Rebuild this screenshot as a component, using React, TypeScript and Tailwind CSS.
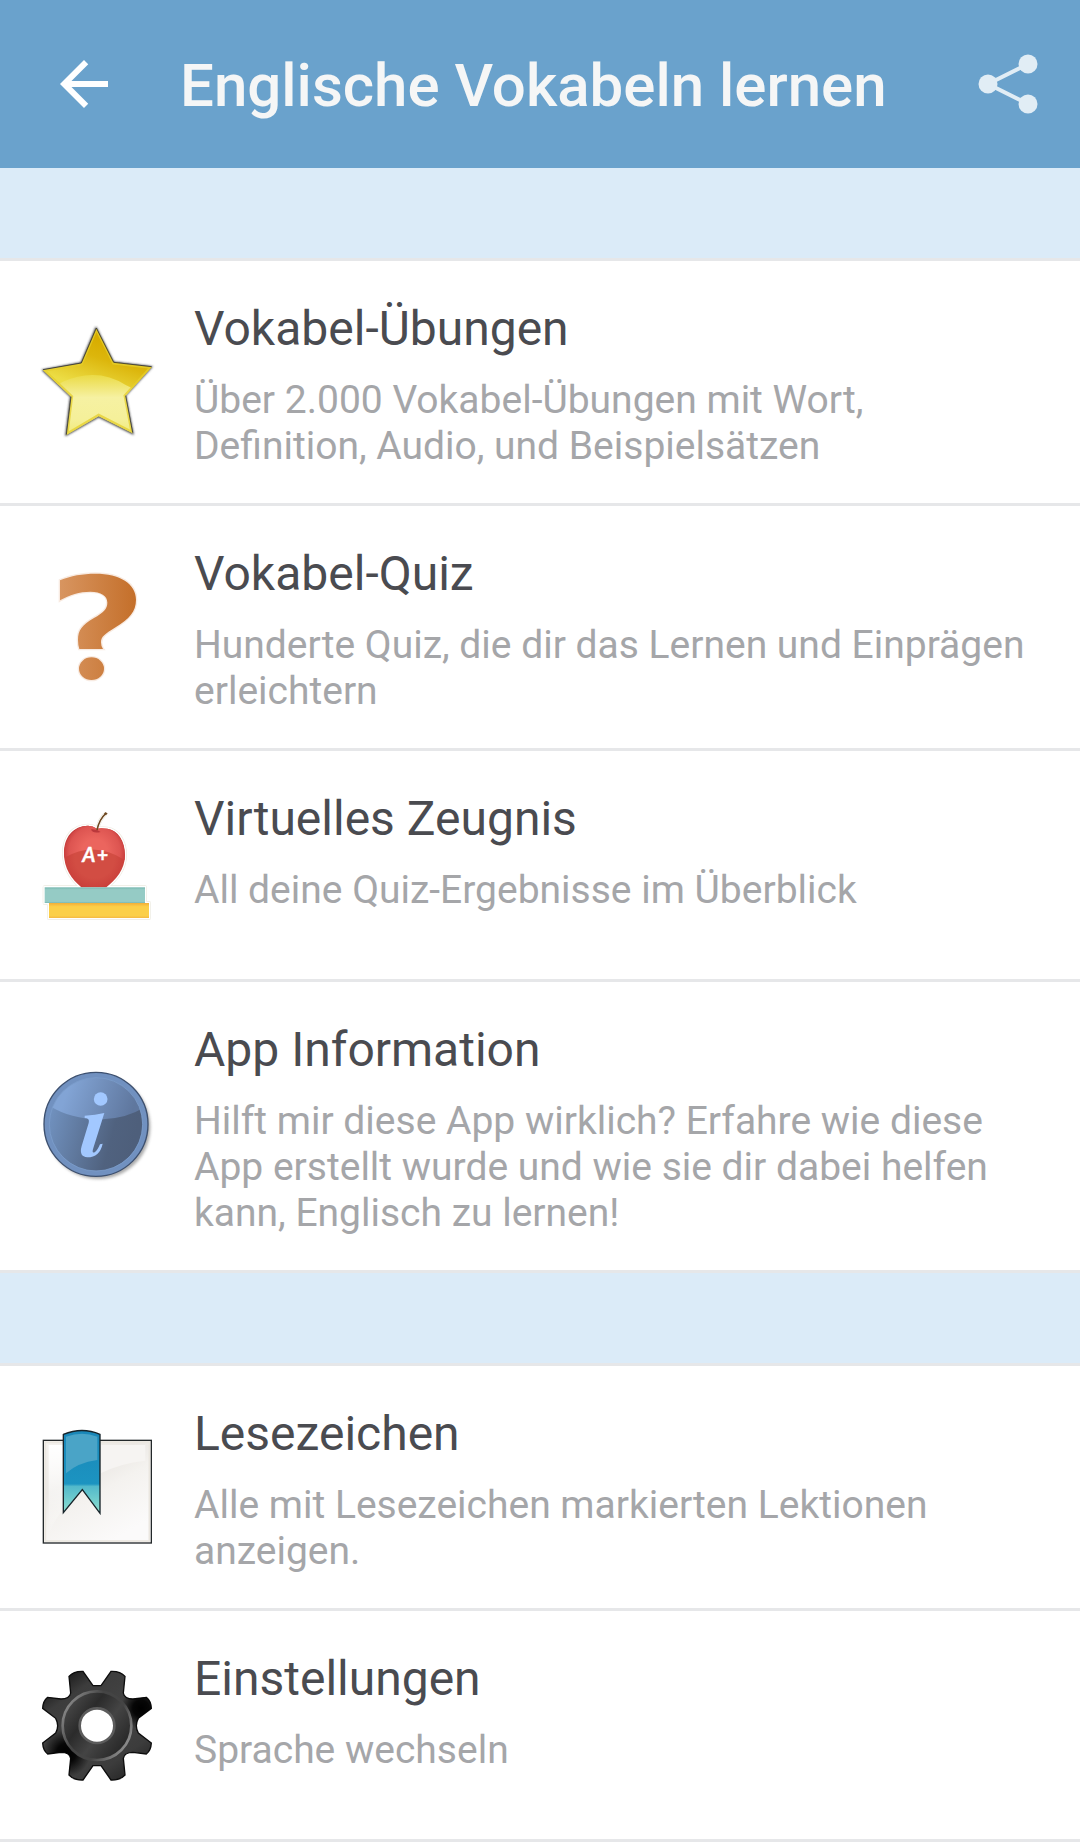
import type { ReactNode } from "react";

function StarIcon() {
  return (
    <svg viewBox="66 81 330 330" className="size-full overflow-visible" aria-hidden="true">
      <defs>
        <linearGradient id="star-base" x1="0" y1="0" x2="0" y2="1">
          <stop offset="0.45" stopColor="#ebdc4a" />
          <stop offset="0.65" stopColor="#f6f1a2" />
          <stop offset="0.85" stopColor="#f5f09a" />
          <stop offset="1" stopColor="#f0ea78" />
        </linearGradient>
        <linearGradient id="star-shade" gradientUnits="userSpaceOnUse" x1="270" y1="130" x2="225" y2="270">
          <stop offset="0" stopColor="#d8ad00" />
          <stop offset="0.35" stopColor="#dcb60c" />
          <stop offset="1" stopColor="#ecdd45" />
        </linearGradient>
        <clipPath id="star-clip">
          <path d="M229 84 281 187 395 201 317 287 338 400 236 349 139 405 153 290 69 210 184 190Z" />
        </clipPath>
        <filter id="star-blur" x="-10%" y="-10%" width="120%" height="120%">
          <feGaussianBlur stdDeviation="2.5" />
        </filter>
      </defs>
      <path d="M228 81 281 186 397 200 317 287 340 403 236 351 137 407 151 290 66 210 183 188Z" fill="#333" stroke="#555" strokeWidth="3" filter="url(#star-blur)" />
      <path d="M229 84 281 187 395 201 317 287 338 400 236 349 139 405 153 290 69 210 184 190Z" fill="url(#star-base)" />
      <g clipPath="url(#star-clip)">
        <path d="M50 70H410V300L317 255Q230 200 127 246L100 265 50 230Z" fill="url(#star-shade)" />
        <path d="M229 86 281 189 393 202 315 287 336 397 236 346 141 402 155 290 72 211 184 192Z" fill="none" stroke="#e6cf2c" strokeOpacity="0.75" strokeWidth="9" />
      </g>
      <path d="M69 209 184 189 229 84 281 187 395 200M153 290 139 404M317 287 338 398" fill="none" stroke="#333" strokeWidth="2.5" />
    </svg>
  );
}

function QuizIcon() {
  return (
    <svg viewBox="66 66 330 330" className="size-full overflow-visible" aria-hidden="true">
      <defs>
        <linearGradient id="quiz-fill" gradientUnits="userSpaceOnUse" x1="120" y1="0" x2="348" y2="0">
          <stop offset="0" stopColor="#d89560" />
          <stop offset="1" stopColor="#c46f2a" />
        </linearGradient>
      </defs>
      <g fill="url(#quiz-fill)" stroke="#f8ebe2" strokeWidth="8" paintOrder="stroke">
        <path d="M120 91C152 77 188 71 226 71C300 71 348 101 348 149C348 185 328 206 288 231C254 252 243 260 243 277Q243 289 249 297H178Q174 286 174 270C174 240 186 225 222 204C250 188 262 177 262 158C262 137 243 125 211 125C179 125 149 134 120 151Z" />
        <ellipse cx="214.5" cy="356" rx="37.5" ry="34" />
      </g>
    </svg>
  );
}

function ReportIcon() {
  return (
    <svg viewBox="66 60 330 330" className="size-full overflow-visible" aria-hidden="true">
      <defs>
        <radialGradient id="apple-fill" gradientUnits="userSpaceOnUse" cx="224" cy="205" r="108">
          <stop offset="0.55" stopColor="#d24d43" />
          <stop offset="0.85" stopColor="#ca403b" />
          <stop offset="1" stopColor="#b92f31" />
        </radialGradient>
        <radialGradient id="apple-shine" gradientUnits="userSpaceOnUse" cx="224" cy="185" r="95">
          <stop offset="0.4" stopColor="#eb655e" />
          <stop offset="0.8" stopColor="#dd5551" />
          <stop offset="1" stopColor="#c63b3b" />
        </radialGradient>
        <linearGradient id="book-top" x1="0" y1="0" x2="0" y2="1">
          <stop offset="0" stopColor="#74b6ae" />
          <stop offset="0.15" stopColor="#95cbc5" />
          <stop offset="0.9" stopColor="#95cbc5" />
          <stop offset="1" stopColor="#7ab9b1" />
        </linearGradient>
        <linearGradient id="book-bottom" x1="0" y1="0" x2="0" y2="1">
          <stop offset="0" stopColor="#f1ae38" />
          <stop offset="0.25" stopColor="#fbcf48" />
          <stop offset="0.85" stopColor="#fbcf48" />
          <stop offset="1" stopColor="#f4b842" />
        </linearGradient>
      </defs>
      <g fill="#fff" stroke="#eceae0" strokeWidth="12" strokeLinejoin="round">
        <path d="M184 292C155 268 132 236 132 190C132 140 160 108 204 107Q218 107 231 116Q242 113 262 116C294 121 315 153 315 195C315 239 288 268 259 292Z" />
        <path d="M231 118Q240 85 258 70" fill="none" />
        <path d="M74 292H375V339H387V384H87V339H74Z" />
      </g>
      <g fill="#fff" stroke="#fff" strokeWidth="8">
        <path d="M184 292C155 268 132 236 132 190C132 140 160 108 204 107Q218 107 231 116Q242 113 262 116C294 121 315 153 315 195C315 239 288 268 259 292Z" />
        <path d="M231 118Q240 85 258 70" fill="none" />
        <path d="M74 292H375V339H387V384H87V339H74Z" />
      </g>
      <path d="M184 292C155 268 132 236 132 190C132 140 160 108 204 107Q218 107 231 116Q242 113 262 116C294 121 315 153 315 195C315 239 288 268 259 292Z" fill="url(#apple-fill)" />
      <path d="M133 203C129 148 160 108 204 107Q218 107 231 116Q242 113 262 116C294 121 319 160 314 210Q224 150 133 203Z" fill="url(#apple-shine)" />
      <path d="M213 118Q218 132 242 126Q230 116 213 118Z" fill="#a92a30" opacity="0.7" />
      <path d="M231 120Q238 88 257 71" fill="none" stroke="#6f4922" strokeWidth="4.5" />
      <path d="M252 71 257 66 263 71 257 76Z" fill="#6f4922" />
      <g fill="#fff" stroke="#fff" strokeWidth="1" fontFamily="Lato, sans-serif" fontSize="61" fontWeight="700">
        <text x="187" y="215" fontStyle="italic">A</text>
        <text x="231" y="215" fontSize="58">+</text>
      </g>
      <rect x="74" y="292" width="301" height="47" fill="url(#book-top)" />
      <rect x="87" y="339" width="300" height="45" fill="url(#book-bottom)" />
    </svg>
  );
}

function InfoIcon() {
  return (
    <svg viewBox="66 63 330 330" className="size-full overflow-visible" aria-hidden="true">
      <defs>
        <linearGradient id="info-body" gradientUnits="userSpaceOnUse" x1="90" y1="170" x2="350" y2="240">
          <stop offset="0" stopColor="#7192c0" />
          <stop offset="0.75" stopColor="#50627f" />
          <stop offset="1" stopColor="#4e5f7b" />
        </linearGradient>
        <linearGradient id="info-shine" gradientUnits="userSpaceOnUse" x1="140" y1="130" x2="330" y2="200">
          <stop offset="0" stopColor="#82a4d5" />
          <stop offset="1" stopColor="#5f779e" />
        </linearGradient>
        <filter id="info-blur" x="-10%" y="-10%" width="120%" height="120%">
          <feGaussianBlur stdDeviation="4" />
        </filter>
        <clipPath id="info-clip">
          <circle cx="228" cy="223" r="140" />
        </clipPath>
      </defs>
      <circle cx="235" cy="231" r="156" fill="#888" opacity="0.7" filter="url(#info-blur)" />
      <circle cx="228" cy="223" r="156" fill="#7191c0" stroke="#3d506f" strokeWidth="4" />
      <circle cx="228" cy="223" r="139" fill="url(#info-body)" />
      <g clipPath="url(#info-clip)">
        <path d="M70 60H390V158Q340 203 248 208Q150 210 80 162Z" fill="url(#info-shine)" />
      </g>
      <circle cx="228" cy="223" r="140" fill="none" stroke="#7b9cca" strokeWidth="2.5" />
      <g fill="#a2c8ff">
        <circle cx="242" cy="147" r="20.5" />
        <path d="M253 189 220 294Q214 312 225 306Q233 300 240 283L248 281Q239 322 202 322Q176 320 185 288L206 219Q210 204 194 204V197Q226 195 253 189Z" />
      </g>
    </svg>
  );
}

function BookmarkIcon() {
  return (
    <svg viewBox="66 66 330 330" className="size-full overflow-visible" aria-hidden="true">
      <defs>
        <linearGradient id="page-fill" x1="0" y1="0" x2="0.6" y2="1">
          <stop offset="0" stopColor="#f5f3ef" />
          <stop offset="0.4" stopColor="#ebe8e4" />
          <stop offset="0.6" stopColor="#f4f2ef" />
          <stop offset="1" stopColor="#fbfafa" />
        </linearGradient>
        <linearGradient id="ribbon-fill" gradientUnits="userSpaceOnUse" x1="0" y1="65" x2="0" y2="310">
          <stop offset="0" stopColor="#1a87b8" />
          <stop offset="0.64" stopColor="#1c94c1" />
          <stop offset="0.67" stopColor="#52b9cb" />
          <stop offset="1" stopColor="#8fe0d0" />
        </linearGradient>
        <linearGradient id="page-edge" x1="0" y1="0" x2="0" y2="1">
          <stop offset="0" stopColor="#fff" />
          <stop offset="1" stopColor="#fff" stopOpacity="0" />
        </linearGradient>
      </defs>
      <rect x="70" y="91" width="324" height="308" fill="url(#page-fill)" stroke="#23282a" strokeWidth="4" />
      <rect x="76" y="97" width="312" height="296" fill="none" stroke="#ebe7e0" strokeWidth="5" />
      <path d="M86 105H130V300Q100 330 86 380Z" fill="url(#page-edge)" />
      <path d="M242 105H376V152Q300 160 242 190Z" fill="#f6f4f2" />
      <path d="M130 73Q187 50 240 73V310L187 239 130 308Z" fill="url(#ribbon-fill)" stroke="#172329" strokeWidth="4" />
      <path d="M138 80Q187 63 232 80V150Q173 158 138 190Z" fill="#4aa4c7" />
    </svg>
  );
}

function GearIcon() {
  return (
    <svg viewBox="-165 -167 330 330" className="size-full overflow-visible" aria-hidden="true">
      <defs>
        <linearGradient id="gear-body" x1="0.15" y1="0" x2="0.85" y2="1">
          <stop offset="0" stopColor="#111" />
          <stop offset="0.2" stopColor="#3c3c3c" />
          <stop offset="0.5" stopColor="#444" />
          <stop offset="0.8" stopColor="#3c3c3c" />
          <stop offset="1" stopColor="#222" />
        </linearGradient>
        <radialGradient id="gear-dark">
          <stop offset="0" stopColor="#000" />
          <stop offset="0.4" stopColor="#000" stopOpacity="0.9" />
          <stop offset="1" stopColor="#000" stopOpacity="0" />
        </radialGradient>
        <linearGradient id="gear-disc" x1="0.1" y1="0.2" x2="0.9" y2="0.8">
          <stop offset="0" stopColor="#454545" />
          <stop offset="0.3" stopColor="#2b2b2b" />
          <stop offset="0.6" stopColor="#444" />
          <stop offset="1" stopColor="#282828" />
        </linearGradient>
        <linearGradient id="gear-rim" x1="0" y1="0.2" x2="1" y2="0.8">
          <stop offset="0" stopColor="#909090" />
          <stop offset="0.35" stopColor="#444" />
          <stop offset="0.65" stopColor="#444" />
          <stop offset="1" stopColor="#999" />
        </linearGradient>
        <clipPath id="gear-clip">
          <path d="M-12-120H12L42-163Q70-164 84-148L79-98Q82-80 108-80L148-85Q162-74 163-52L124-22Q112 0 124 22L163 52Q162 74 148 85L108 80Q82 80 79 98L84 148Q70 164 42 163L12 120H-12L-42 163Q-70 164-84 148L-79 98Q-82 80-108 80L-148 85Q-162 74-163 52L-124 22Q-112 0-124-22L-163-52Q-162-74-148-85L-108-80Q-82-80-79-98L-84-148Q-70-164-42-163Z" />
        </clipPath>
      </defs>
      <path d="M-12-120H12L42-163Q70-164 84-148L79-98Q82-80 108-80L148-85Q162-74 163-52L124-22Q112 0 124 22L163 52Q162 74 148 85L108 80Q82 80 79 98L84 148Q70 164 42 163L12 120H-12L-42 163Q-70 164-84 148L-79 98Q-82 80-108 80L-148 85Q-162 74-163 52L-124 22Q-112 0-124-22L-163-52Q-162-74-148-85L-108-80Q-82-80-79-98L-84-148Q-70-164-42-163Z" fill="url(#gear-body)" stroke="#0c0c0c" strokeWidth="4" />
      <g clipPath="url(#gear-clip)">
        <circle cx="132" cy="-52" r="62" fill="url(#gear-dark)" />
        <circle cx="-92" cy="82" r="72" fill="url(#gear-dark)" />
      </g>
      <circle r="103" fill="url(#gear-disc)" stroke="url(#gear-rim)" strokeWidth="8" />
      <circle r="52" fill="#fff" stroke="#5c5c5c" strokeWidth="8" />
    </svg>
  );
}

type Entry = { title: string; text: string; icon: ReactNode };

const lessons: Entry[] = [
  {
    title: "Vokabel-Übungen",
    text: "Über 2.000 Vokabel-Übungen mit Wort, Definition, Audio, und Beispielsätzen",
    icon: <StarIcon />,
  },
  {
    title: "Vokabel-Quiz",
    text: "Hunderte Quiz, die dir das Lernen und Einprägen erleichtern",
    icon: <QuizIcon />,
  },
  {
    title: "Virtuelles Zeugnis",
    text: "All deine Quiz-Ergebnisse im Überblick",
    icon: <ReportIcon />,
  },
  {
    title: "App Information",
    text: "Hilft mir diese App wirklich? Erfahre wie diese App erstellt wurde und wie sie dir dabei helfen kann, Englisch zu lernen!",
    icon: <InfoIcon />,
  },
];

const tools: Entry[] = [
  {
    title: "Lesezeichen",
    text: "Alle mit Lesezeichen markierten Lektionen anzeigen.",
    icon: <BookmarkIcon />,
  },
  { title: "Einstellungen", text: "Sprache wechseln", icon: <GearIcon /> },
];

function Section({ entries }: { entries: Entry[] }) {
  return (
    <section>
      <div className="h-[93px] border-b-3 border-[#e6e7e9] bg-[#dbebf8]" />
      <ul>
        {entries.map((entry) => (
          <li key={entry.title} className="border-b-3 border-[#e6e7e9] bg-white">
            <a href="#" className="flex min-h-[228px] items-stretch gap-[42px] pr-10 pl-[42px]">
              <span className="flex shrink-0 items-center">
                <span className="block size-[110px]">{entry.icon}</span>
              </span>
              <span className="flex min-w-0 flex-1 flex-col gap-5 pt-10 pb-[34px]">
                <span className="text-[48px] leading-[56px] text-[#4a4b50]">{entry.title}</span>
                <span className="text-[39px] leading-[46px] text-[#a5a6a9]">{entry.text}</span>
              </span>
            </a>
          </li>
        ))}
      </ul>
    </section>
  );
}

export default function App() {
  return (
    <div className="min-h-screen bg-white font-['Roboto',sans-serif]">
      <header className="flex h-[168px] items-center bg-[#6aa2cc] pr-[39px] pl-12">
        <button type="button" aria-label="Zurück" className="size-[72px] shrink-0">
          <svg viewBox="0 0 24 24" className="size-full" fill="#fff" aria-hidden="true">
            <path d="M20 11H7.83l5.59-5.59L12 4l-8 8 8 8 1.41-1.41L7.83 13H20z" />
          </svg>
        </button>
        <h1 className="ml-[60px] min-w-0 flex-1 pt-1 text-[60px] leading-[70px] font-medium text-[#f5f6f6]">
          Englische Vokabeln lernen
        </h1>
        <button type="button" aria-label="Teilen" className="size-16 shrink-0">
          <svg viewBox="0 0 64 64" className="size-full" aria-hidden="true">
            <path d="M51 12 11 32 51 52" fill="none" stroke="#e1edf5" strokeWidth="4" />
            <g fill="#e1edf5">
              <circle cx="51" cy="12" r="9.5" />
              <circle cx="11" cy="32" r="9.5" />
              <circle cx="51" cy="52" r="9.5" />
            </g>
          </svg>
        </button>
      </header>
      <main>
        <Section entries={lessons} />
        <Section entries={tools} />
      </main>
    </div>
  );
}
